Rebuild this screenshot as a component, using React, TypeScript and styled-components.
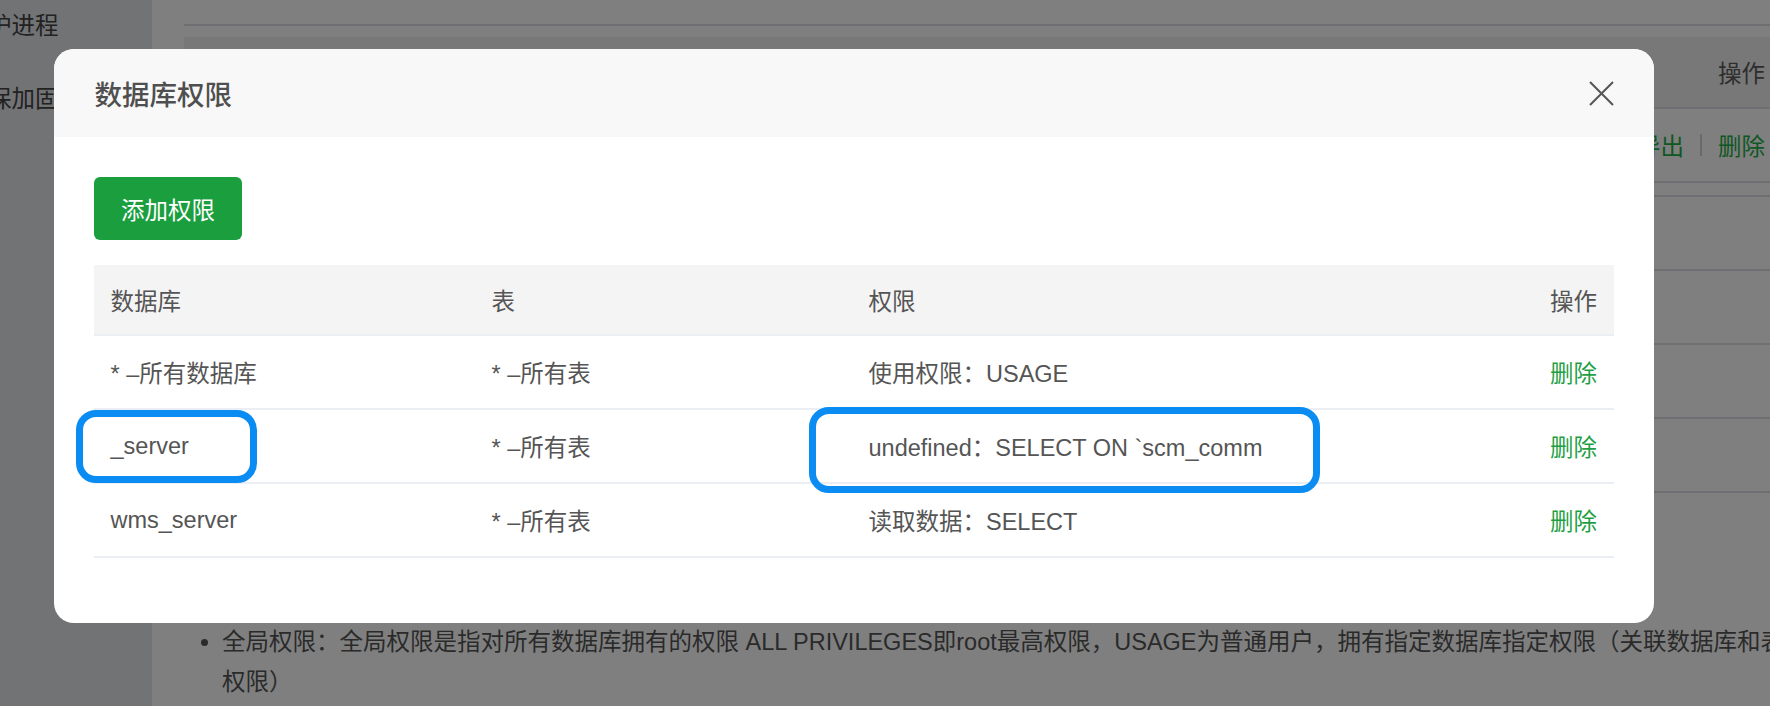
import React from "react";
import styled, { createGlobalStyle } from "styled-components";

const FONT = `"Liberation Sans", "Noto Sans CJK SC", "Noto Sans", sans-serif`;

const GlobalStyle = createGlobalStyle`
  html, body {
    margin: 0;
    padding: 0;
    width: 1770px;
    height: 706px;
    overflow: hidden;
    background: #fff;
  }
  body {
    font-family: ${FONT};
    color: #555;
  }
  * { box-sizing: border-box; }
`;

/* ---------- page underneath the dialog ---------- */

const Page = styled.div`
  display: flex;
  width: 1770px;
  height: 706px;
  overflow: hidden;
`;

const Sidebar = styled.aside`
  flex: 0 0 152px;
  background: #e4e6eb;
  display: flex;
  flex-direction: column;
  margin-top: -10px;
  overflow: hidden;
`;

const SideItem = styled.div`
  height: 73px;
  line-height: 73px;
  font-size: 23.5px;
  color: #444;
  white-space: nowrap;
  margin-left: -35.5px;
`;

const Main = styled.main`
  flex: 1 0 auto;
  background: #fff;
  padding-left: 32px;
  display: flex;
  flex-direction: column;
`;

const Rule = styled.div`
  margin-top: 24px;
  width: 1597px;
  height: 2px;
  background: #dcdfe6;
`;

const ListTable = styled.div<{ $gap: number; $topBorder?: boolean }>`
  margin-top: ${(p) => p.$gap}px;
  width: 1597px;
  border-top: ${(p) => (p.$topBorder ? "2px solid #dcdfe6" : "none")};
  display: flex;
  flex-direction: column;
`;

const ListHead = styled.div`
  height: 72px;
  background: #f0f0f0;
  border-bottom: 2px solid #dcdfe6;
  display: flex;
  align-items: center;
  justify-content: flex-end;
  padding-right: 16px;
  font-size: 23.5px;
  color: #5c5c5c;
`;

const ListRow = styled.div`
  height: 74px;
  border-bottom: 2px solid #dcdfe6;
  display: flex;
  align-items: center;
  justify-content: flex-end;
  padding-right: 16px;
  font-size: 23.5px;
`;

const Actions = styled.div`
  display: flex;
  align-items: center;
  gap: 16px;
`;

const ActionLink = styled.span`
  color: #1eae46;
`;

const ActionDivider = styled.span`
  width: 2px;
  height: 22px;
  background: #d2d4dc;
`;

const Notes = styled.ul`
  margin: 129px 0 0;
  padding: 0;
  list-style: none;
  font-size: 23.5px;
  line-height: 40px;
  color: #555;
  white-space: nowrap;
`;

const Note = styled.li`
  display: grid;
  grid-template-columns: 38px auto;

  &::before {
    content: "";
    width: 7px;
    height: 7px;
    border-radius: 50%;
    background: #555;
    margin: 16.5px 0 0 17px;
  }
`;

/* ---------- dialog ---------- */

const Overlay = styled.div`
  position: fixed;
  inset: 0;
  background: rgba(0, 0, 0, 0.5);
  display: flex;
  align-items: flex-start;
  padding: 49px 0 0 54px;
`;

const Dialog = styled.section`
  width: 1600px;
  background: #fff;
  border-radius: 20px;
  overflow: hidden;
`;

const DialogHeader = styled.header`
  height: 88px;
  background: #f8f8f8;
  display: flex;
  align-items: center;
  justify-content: space-between;
  padding: 0 40px 0 40.5px;
`;

const DialogTitle = styled.h2`
  margin: 0;
  font-size: 27.5px;
  font-weight: 500;
  color: #4f4f4f;
`;

const CloseButton = styled.button`
  width: 25px;
  height: 25px;
  padding: 0;
  border: none;
  background: transparent;
  display: flex;
  cursor: pointer;
`;

const DialogBody = styled.div`
  padding: 40px 40px 65px;
  display: flex;
  flex-direction: column;
  align-items: flex-start;
`;

const PrimaryButton = styled.button`
  height: 63px;
  padding: 0 27px;
  border: none;
  border-radius: 6px;
  background: #1a9e3e;
  color: #fff;
  font-family: ${FONT};
  font-size: 23.5px;
  cursor: pointer;
`;

const TableWrap = styled.div`
  position: relative;
  margin-top: 25px;
  width: 1520px;
`;

const GridRow = styled.div<{ $head?: boolean }>`
  display: grid;
  grid-template-columns: 381px 377px 1fr 160px;
  height: ${(p) => (p.$head ? 71 : 74)}px;
  background: ${(p) => (p.$head ? "#f4f4f4" : "#fff")};
  border-bottom: 2px solid #ebeef5;
  font-size: 23.5px;
  color: #555;
`;

const Cell = styled.div<{ $end?: boolean }>`
  display: flex;
  align-items: center;
  justify-content: ${(p) => (p.$end ? "flex-end" : "flex-start")};
  padding: 0 17px 0 16.5px;
  white-space: nowrap;
  overflow: hidden;
`;

const DeleteLink = styled.span`
  color: #1f9f44;
  cursor: pointer;
`;

/* highlight frames drawn over the grid */
const Callout = styled.div<{ $x: number; $y: number; $w: number; $h: number }>`
  position: absolute;
  left: ${(p) => p.$x}px;
  top: ${(p) => p.$y}px;
  width: ${(p) => p.$w}px;
  height: ${(p) => p.$h}px;
  border: 7px solid #0a8cf2;
  border-radius: 20px;
  pointer-events: none;
`;

const CloseIcon = () => (
  <svg width="25" height="25" viewBox="0 0 25 25" fill="none">
    <path d="M1 1 L24 24 M24 1 L1 24" stroke="#555" strokeWidth="2" />
  </svg>
);

type Grant = { db: string; table: string; priv: string };

const grants: Grant[] = [
  { db: "* –所有数据库", table: "* –所有表", priv: "使用权限：USAGE" },
  { db: "_server", table: "* –所有表", priv: "undefined：SELECT ON `scm_comm" },
  { db: "wms_server", table: "* –所有表", priv: "读取数据：SELECT" },
];

export default function App() {
  return (
    <>
      <GlobalStyle />
      <Page>
        <Sidebar>
          <SideItem>守护进程</SideItem>
          <SideItem>确保加固</SideItem>
        </Sidebar>
        <Main>
          <Rule />
          <ListTable $gap={11}>
            <ListHead>操作</ListHead>
            <ListRow>
              <Actions>
                <ActionLink>导出</ActionLink>
                <ActionDivider />
                <ActionLink>删除</ActionLink>
              </Actions>
            </ListRow>
          </ListTable>
          <ListTable $gap={12} $topBorder>
            <ListRow />
            <ListRow />
            <ListRow />
            <ListRow />
          </ListTable>
          <Notes>
            <Note>
              <span>
                全局权限：全局权限是指对所有数据库拥有的权限 ALL PRIVILEGES即root最高权限，USAGE为普通用户，拥有指定数据库指定权限（关联数据库和表的
                <br />
                权限）
              </span>
            </Note>
          </Notes>
        </Main>
      </Page>

      <Overlay>
        <Dialog>
          <DialogHeader>
            <DialogTitle>数据库权限</DialogTitle>
            <CloseButton aria-label="关闭">
              <CloseIcon />
            </CloseButton>
          </DialogHeader>
          <DialogBody>
            <PrimaryButton>添加权限</PrimaryButton>
            <TableWrap>
              <GridRow $head>
                <Cell>数据库</Cell>
                <Cell>表</Cell>
                <Cell>权限</Cell>
                <Cell $end>操作</Cell>
              </GridRow>
              {grants.map((g) => (
                <GridRow key={g.db}>
                  <Cell>{g.db}</Cell>
                  <Cell>{g.table}</Cell>
                  <Cell>{g.priv}</Cell>
                  <Cell $end>
                    <DeleteLink>删除</DeleteLink>
                  </Cell>
                </GridRow>
              ))}
              <Callout $x={-18} $y={145} $w={181} $h={73} />
              <Callout $x={715} $y={142} $w={511} $h={86} />
            </TableWrap>
          </DialogBody>
        </Dialog>
      </Overlay>
    </>
  );
}
